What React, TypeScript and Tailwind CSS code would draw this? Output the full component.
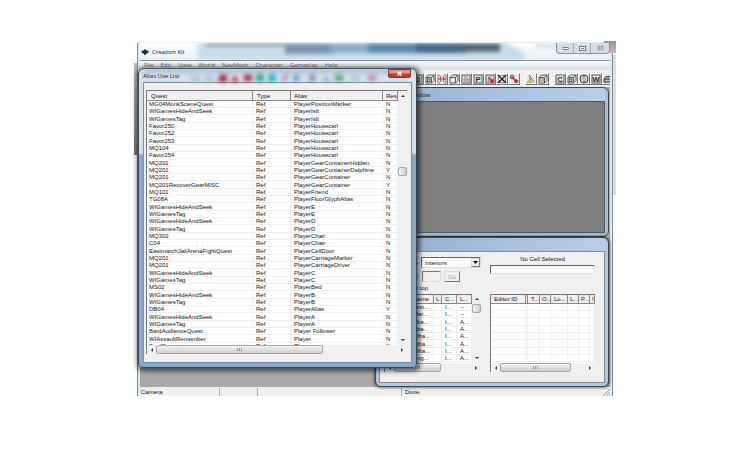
import React from 'react';

const MENUS = ['File', 'Edit', 'View', 'World', 'NavMesh', 'Character', 'Gameplay', 'Help'];

const ROWS: [string, string, string][] = [
  ['MG04MonkSceneQuest', 'PlayerPositionMarker', 'N'],
  ['WIGamesHideAndSeek', 'PlayerIsIt', 'N'],
  ['WIGamesTag', 'PlayerIsIt', 'N'],
  ['Favor250', 'PlayerHousecarl', 'N'],
  ['Favor252', 'PlayerHousecarl', 'N'],
  ['Favor253', 'PlayerHousecarl', 'N'],
  ['MQ104', 'PlayerHousecarl', 'N'],
  ['Favor254', 'PlayerHousecarl', 'N'],
  ['MQ201', 'PlayerGearContainerHidden', 'N'],
  ['MQ201', 'PlayerGearContainerDelphine', 'Y'],
  ['MQ201', 'PlayerGearContainer', 'N'],
  ['MQ201RecoverGearMISC', 'PlayerGearContainer', 'Y'],
  ['MQ101', 'PlayerFriend', 'N'],
  ['TG08A', 'PlayerFloorGlyphAlias', 'N'],
  ['WIGamesHideAndSeek', 'PlayerE', 'N'],
  ['WIGamesTag', 'PlayerE', 'N'],
  ['WIGamesHideAndSeek', 'PlayerD', 'N'],
  ['WIGamesTag', 'PlayerD', 'N'],
  ['MQ302', 'PlayerChair', 'N'],
  ['C04', 'PlayerChair', 'N'],
  ['EastmarchJailArenaFightQuest', 'PlayerCellDoor', 'N'],
  ['MQ201', 'PlayerCarriageMarker', 'N'],
  ['MQ201', 'PlayerCarriageDriver', 'N'],
  ['WIGamesHideAndSeek', 'PlayerC', 'N'],
  ['WIGamesTag', 'PlayerC', 'N'],
  ['MS02', 'PlayerBed', 'N'],
  ['WIGamesHideAndSeek', 'PlayerB', 'N'],
  ['WIGamesTag', 'PlayerB', 'N'],
  ['DB04', 'PlayerAlias', 'Y'],
  ['WIGamesHideAndSeek', 'PlayerA', 'N'],
  ['WIGamesTag', 'PlayerA', 'N'],
  ['BardAudienceQuest', 'Player Follower', 'N'],
  ['WIAssaultRemember', 'Player', 'N'],
  ['BardSongs', 'Player', 'N'],
];

const CELLS = [
  ['Test...', '--'],
  ['Mar...', '--'],
  ['Aba...', 'A...'],
  ['Aba...', 'A...'],
  ['Alfta...', 'A...'],
  ['Alfta...', 'A...'],
  ['Alfta...', 'A...'],
  ['Ang...', 'A...'],
];

type ToolName = 'zero' | 'cube' | 'split' | 'box' | 'square' | 'p' | 'snap' | 'cross' | 'link' | 'lamp' | 'bulb' | 'c' | 'circle' | 'w' | 'car';

const GROUPS: ToolName[][] = [
  ['zero', 'cube', 'split', 'box', 'square', 'p', 'snap', 'cross', 'link'],
  ['lamp', 'bulb'],
  ['c', 'cube', 'circle', 'w', 'car'],
];

function ToolIcon({ name }: { name: ToolName }) {
  const letters: Partial<Record<ToolName, string>> = { zero: '0', p: 'P', c: 'C', w: 'W' };
  return (
    <svg width="10" height="10" viewBox="0 0 10 10" fill="none" stroke="#333" strokeWidth="0.8">
      {letters[name] && (
        <>
          <rect x="1" y="1" width="8" height="8" />
          <text x="5" y="7.7" textAnchor="middle" fontSize="7.5" fontWeight="700" fontFamily="Liberation Sans, sans-serif" fill="#222" stroke="none">
            {letters[name]}
          </text>
        </>
      )}
      {(name === 'cube' || name === 'box' || name === 'bulb') && (
        <path d="M1 3.5h5.5v5.5H1zM1 3.5 3.5 1H9v5.5L6.5 9M6.5 3.5 9 1" />
      )}
      {name === 'cube' && <rect x="2.5" y="5" width="2.5" height="2.5" />}
      {name === 'bulb' && <circle cx="4" cy="5.5" r="1.8" fill="#dddc2c" stroke="#555" strokeWidth="0.5" />}
      {name === 'split' && (
        <>
          <path d="M3 1H1v8h2M7 1h2v8H7M3.5 2v6M6.5 2v6" stroke="#766" />
          <path d="M1 5h8M4 3.5 2.5 5 4 6.5M6 3.5 7.5 5 6 6.5" stroke="#d33" strokeWidth="1" />
        </>
      )}
      {(name === 'square' || name === 'snap') && (
        <>
          <rect x="1" y="1" width="8" height="8" />
          <path d="M3 3h4M3 5h4v2H3z" stroke="#666" />
        </>
      )}
      {name === 'snap' && <path d="M3.5 3.5 8 8M8 5v3H5" stroke="#d22" strokeWidth="1.3" />}
      {name === 'cross' && (
        <>
          <rect x="1.5" y="1.5" width="7" height="7" stroke="#777" />
          <path d="M1 1l8 8M9 1 1 9" stroke="#222" strokeWidth="1.4" />
        </>
      )}
      {name === 'link' && (
        <>
          <circle cx="3" cy="3" r="1.8" fill="#b99" stroke="#722" />
          <path d="M3.5 3.5 7 7" stroke="#c22" strokeWidth="1.6" />
          <circle cx="7.2" cy="7.2" r="1.5" fill="#e33" stroke="#822" />
        </>
      )}
      {name === 'lamp' && (
        <>
          <path d="M3 1l5 7M4 3.5v4.5" stroke="#333" />
          <path d="M1 8.5 4 5l2 3.5z" fill="#d4c83a" stroke="#887d22" strokeWidth="0.5" />
        </>
      )}
      {name === 'circle' && (
        <>
          <circle cx="5" cy="5" r="4" strokeWidth="1" />
          <path d="M5 2 3.5 5 5 8l1.5-3z" stroke="#666" />
        </>
      )}
      {name === 'car' && <path d="M1 5l2-2.5h5L9 5v3H1zM1 5h8M2.5 8v1M7.5 8v1" fill="#bbb" strokeWidth="1" />}
    </svg>
  );
}

function Arrow({ dir }: { dir: 'up' | 'down' | 'left' | 'right' }) {
  const paths = { up: 'M1 4h4L3 2z', down: 'M1 2h4L3 4z', left: 'M4 1v4L2 3z', right: 'M2 1v4l2-2z' };
  return (
    <svg width="6" height="6" viewBox="0 0 6 6" fill="#333">
      <path d={paths[dir]} />
    </svg>
  );
}

function HScroll({ thumb }: { thumb: string }) {
  return (
    <div className="flex h-[9px] shrink-0 items-center bg-[#f0f0f0] px-0.5">
      <Arrow dir="left" />
      <div className="flex h-full flex-1 px-px">
        <div className={`flex h-full items-center justify-center gap-px rounded-xs border border-[#a5a5a5] bg-linear-to-b from-[#f4f4f4] to-[#cfcfcf] ${thumb}`}>
          <i className="h-[3px] w-px bg-[#999]" />
          <i className="h-[3px] w-px bg-[#999]" />
          <i className="h-[3px] w-px bg-[#999]" />
        </div>
      </div>
      <Arrow dir="right" />
    </div>
  );
}

function VScroll({ offset }: { offset: string }) {
  return (
    <div className="flex w-[9px] shrink-0 flex-col items-center bg-[#f0f0f0] py-0.5">
      <Arrow dir="up" />
      <div className={`flex-1 ${offset}`}>
        <div className="h-[9px] w-[9px] rounded-xs border border-[#a5a5a5] bg-linear-to-r from-[#f4f4f4] to-[#cfcfcf]" />
      </div>
      <Arrow dir="down" />
    </div>
  );
}

function Th({ children, className = 'pl-1' }: { children?: React.ReactNode; className?: string }) {
  return (
    <th className={`border-r border-b border-[#8a8a8a] bg-[#f0f0f0] py-0 pr-0 text-left font-normal whitespace-nowrap ${className}`}>
      {children}
    </th>
  );
}

function Td({ children, className = 'pl-0' }: { children?: React.ReactNode; className?: string }) {
  return (
    <td className={`border-r border-b border-[#eeeeee] py-0 pr-0 leading-[6px] whitespace-nowrap ${className}`}>
      {children}
    </td>
  );
}

function AliasWindow() {
  return (
    <section className="absolute top-[25px] left-0 flex h-[300px] w-[279px] flex-col rounded-t-md rounded-b-sm border border-[#3c4650] bg-linear-to-b from-[#d4e1ef] from-28% to-[#86a9cb] to-29% px-1 pb-1 shadow-[1px_1px_5px_2px_rgba(0,0,0,0.6)]">
      <header className="relative flex h-[13px] shrink-0 items-center justify-between">
        <svg className="absolute inset-0 h-full w-full blur-[2px]" aria-hidden="true">
          <rect width="100%" height="4" fill="#8799ae" opacity="0.5" />
          <rect x="48" y="7" width="9" height="6" fill="#b3c0ca" />
          <rect x="62" y="7" width="8" height="6" fill="#b3c0ca" />
          <rect x="76" y="6" width="8" height="7" fill="#b82434" />
          <path d="M88 13l4-7 4 7z" fill="#a63243" />
          <rect x="101" y="6" width="8" height="6" fill="#9c2441" />
          <circle cx="117" cy="9" r="4" fill="#32a182" />
          <circle cx="129" cy="9" r="4" fill="#22b9bd" />
          <path d="M139 12l6-6" stroke="#965466" strokeWidth="2" />
          <rect x="151" y="6" width="5" height="6" fill="#5691c6" />
          <rect x="167" y="6" width="5" height="6" fill="#648779" />
          <rect x="180" y="9" width="7" height="3" fill="#879cab" />
          <rect x="192" y="6" width="8" height="6" fill="#54a276" />
          <rect x="208" y="6" width="8" height="6" fill="#b4c3cf" />
          <rect x="225" y="6" width="8" height="6" fill="#bb8b9d" />
        </svg>
        <h2 className="relative font-['Open_Sans',sans-serif] text-[6px] leading-2">Alias Use List</h2>
        <button aria-label="Close" className="relative mr-px flex h-[9px] w-[23px] items-center justify-center self-start rounded-b-xs border border-[#7c3b38] bg-linear-to-b from-[#e09584] from-45% to-[#c03c2a] to-55%">
          <svg width="7" height="5" viewBox="0 0 7 5" stroke="#fff" strokeWidth="1.4">
            <path d="M1.5.5l4 4M5.5.5l-4 4" />
          </svg>
        </button>
      </header>
      <div className="flex min-h-0 flex-1 flex-col border border-[#7e8c9b] bg-[#f0f0f0] pt-[7px] pr-1 pb-2 pl-0.5">
        <div className="flex min-h-0 flex-1 flex-col border-t border-l border-[#777] bg-white">
          <div className="flex min-h-0 flex-1">
            <div className="min-w-0 flex-1 overflow-hidden">
              <table className="w-full table-fixed border-separate border-spacing-0">
                <thead>
                  <tr className="h-[10px]">
                    <Th className="w-[106px] pl-1">Quest</Th>
                    <Th className="w-[38px] pl-1">Type</Th>
                    <Th className="w-[92px] pl-[3px]">Alias</Th>
                    <Th className="pl-[3px]">Res</Th>
                  </tr>
                </thead>
                <tbody>
                  {ROWS.map(([quest, alias, res], i) => (
                    <tr key={i} className="h-[7px] nth-[3n]:h-[8px]">
                      <Td className="pl-0.5">{quest}</Td>
                      <Td className="pl-[3px]">Ref</Td>
                      <Td className="pl-[3px]">{alias}</Td>
                      <Td className="pl-[3px]">{res}</Td>
                    </tr>
                  ))}
                </tbody>
              </table>
            </div>
            <VScroll offset="pt-[68px]" />
          </div>
          <HScroll thumb="w-[69%]" />
        </div>
      </div>
    </section>
  );
}

function CellWindow() {
  return (
    <section className="absolute right-px bottom-0 flex h-[150px] w-[234px] flex-col rounded-md border border-[#3c4650] bg-[#b3cae2] px-[3px] pb-[3px] shadow-[0_0_3px_1px_rgba(0,0,0,0.5)]">
      <header className="h-[13px] shrink-0 rounded-t bg-linear-to-r from-[#91aed0] to-[#b9cfe8]" />
      <div className="flex min-h-0 flex-1 gap-[9px] border border-[#7e8c9b] bg-[#f0f0f0] pt-[5px] pr-[9px] pb-[10px] pl-1">
        <div className="flex w-[97px] shrink-0 flex-col">
          <div className="flex items-center justify-end gap-[3px]">
            <label htmlFor="space" className="whitespace-nowrap">Space</label>
            <span className="relative w-[60px] shrink-0">
              <select id="space" className="block h-[11px] w-full appearance-none border border-[#666] border-r-[#ddd] border-b-[#ddd] bg-white pl-[3px] leading-[8px]">
                <option>Interiors</option>
              </select>
              <span className="pointer-events-none absolute top-px right-px flex h-[9px] w-[9px] items-center justify-center border border-[#ddd] border-r-[#777] border-b-[#777] bg-[#f0f0f0]">
                <svg width="5" height="3" viewBox="0 0 5 3">
                  <path d="M0 0h5L2.500 3z" />
                </svg>
              </span>
            </span>
          </div>
          <div className="mt-[3px] flex items-center gap-[3px] pl-[31px]">
            <label htmlFor="coord">Y</label>
            <input id="coord" disabled className="h-[11px] w-[19px] border border-[#777] border-r-[#ddd] border-b-[#ddd] bg-[#f0f0f0]" />
            <button disabled className="h-[11px] w-[16px] border border-[#ddd] border-r-[#777] border-b-[#777] text-[#999]">
              Go
            </button>
          </div>
          <p className="mt-0.5 h-2 pl-[29px]">at top</p>
          <div className="mt-0.5 flex min-h-0 flex-1 flex-col border-l border-[#777] bg-white">
            <div className="flex min-h-0 flex-1">
              <div className="min-w-0 flex-1 overflow-hidden">
                <table className="w-full table-fixed border-separate border-spacing-0 border-t border-[#777]">
                  <thead>
                    <tr className="h-[9px]">
                      <Th className="w-[49px] pl-[28px]">Name</Th>
                      <Th className="w-[8px] pl-[2px]">L</Th>
                      <Th className="w-[15px] pl-[3px]">C...</Th>
                      <Th className="pl-[3px]">L...</Th>
                    </tr>
                  </thead>
                  <tbody>
                    {CELLS.map(([name, loc], i) => (
                      <tr key={i} className="h-[7px] nth-[3n]:h-[8px]">
                        <Td className="pl-[28px]">{name}</Td>
                        <Td />
                        <Td className="pl-[3px]">I...</Td>
                        <Td className="pl-[3px]">{loc}</Td>
                      </tr>
                    ))}
                  </tbody>
                </table>
              </div>
              <VScroll offset="pt-0.5" />
            </div>
            <HScroll thumb="w-[47px]" />
          </div>
        </div>
        <div className="flex min-w-0 flex-1 flex-col">
          <label htmlFor="cell" className="h-2 text-center leading-[5px]">No Cell Selected</label>
          <input id="cell" className="h-[9px] w-full border border-[#666] border-r-[#ddd] border-b-[#ddd] bg-white" />
          <div className="mt-5 flex min-h-0 flex-1 flex-col border-l border-[#777] bg-white">
            <div className="min-h-0 flex-1 overflow-hidden">
              <table className="w-full table-fixed border-separate border-spacing-0 border-t border-[#777]">
                <thead>
                  <tr className="h-[9px]">
                    <Th className="w-[35px] pl-[3px]">Editor ID</Th>
                    <Th className="w-[2px] pl-0" />
                    <Th className="w-[12px] pl-[3px]">T...</Th>
                    <Th className="w-[11px] pl-[2px]">O...</Th>
                    <Th className="w-[17px] pl-[3px]">Lo...</Th>
                    <Th className="w-[11px] pl-[2px]">L...</Th>
                    <Th className="w-[11px] pl-[2px]">P...</Th>
                    <Th className="pl-[2px]">I</Th>
                  </tr>
                </thead>
                <tbody>
                  {CELLS.map((_, i) => (
                    <tr key={i} className="h-[7px] nth-[3n]:h-[8px]">
                      {[0, 1, 2, 3, 4, 5, 6, 7].map((c) => (
                        <Td key={c} />
                      ))}
                    </tr>
                  ))}
                </tbody>
              </table>
            </div>
            <HScroll thumb="w-[82%]" />
          </div>
        </div>
      </div>
    </section>
  );
}

export default function App() {
  return (
    <div className="flex min-h-screen flex-col bg-white px-[137px] pt-[42px] pb-[72px] font-['Liberation_Sans',sans-serif] text-[6px] leading-2 text-[#111]">
      <main className="relative flex flex-1 flex-col border-t border-r border-l border-[#7f8c96] border-t-[#e3eaf0] bg-[#d9ecf6] px-0.5">
        <div className="absolute top-5 -left-[4px] h-[92px] w-[3px] bg-linear-to-b from-[#bbb] to-[#777]" />
        <div className="absolute -top-0.5 -right-[4px] h-3 w-3 bg-linear-to-b from-[#a18a9b] to-[#c9b5c1]" />
        <div className="absolute top-3 -right-[4px] h-[140px] w-[3px] bg-[#dedede]" />
        <header className="relative flex h-[17px] shrink-0 items-center justify-between overflow-hidden bg-linear-to-b from-white to-[#e5f1f8] pl-px">
          <svg className="absolute inset-0 h-full w-full blur-[2px]" preserveAspectRatio="none" viewBox="0 0 470 17" aria-hidden="true">
            <path d="M58-3h305l22 14 0 7H58z" fill="#c6ddec" />
            <rect x="66" y="-2" width="85" height="5" fill="#8396a5" />
            <rect x="145" y="-3" width="50" height="14" fill="#7895ad" />
            <rect x="190" y="-3" width="44" height="13" fill="#8fadc8" />
            <rect x="228" y="-3" width="54" height="13" fill="#5b86a9" />
            <rect x="276" y="-3" width="50" height="13" fill="#44698a" />
            <rect x="318" y="-3" width="42" height="12" fill="#50687d" />
            <rect x="395" y="-2" width="40" height="8" fill="#dfe5f0" />
          </svg>
          <div className="relative flex items-center gap-[3px]">
            <svg width="8" height="6" viewBox="0 0 8 6" fill="#223032">
              <path d="M0 1.500 2 2 3 .5h2L6 2l2-.5L7 4 5.500 4.500 4.500 6h-1L2.500 4.500 1 4z" />
            </svg>
            <h1 className="font-['Open_Sans',sans-serif]">Creation Kit</h1>
          </div>
          <div className="relative flex h-[11px] self-start rounded-b-sm border border-t-0 border-[#8192a3] bg-[#d6dde8]">
            <button aria-label="Minimize" className="flex w-[17px] items-center justify-center border-r border-[#a1b0be]">
              <i className="h-[3px] w-[7px] rounded-xs border border-[#777] bg-white" />
            </button>
            <button aria-label="Maximize" className="flex w-[17px] items-center justify-center border-r border-[#a1b0be]">
              <i className="flex h-[5px] w-[7px] items-center justify-center border border-[#777] bg-white">
                <i className="h-px w-[3px] bg-[#777]" />
              </i>
            </button>
            <button aria-label="Close" className="flex w-[18px] items-center justify-center">
              <svg width="7" height="6" viewBox="0 0 7 6" fill="none">
                <path d="M1 1l5 4M6 1 1 5" stroke="#666" strokeWidth="2" />
                <path d="M1 1l5 4M6 1 1 5" stroke="#fff" strokeWidth="0.8" />
              </svg>
            </button>
          </div>
        </header>
        <nav className="flex h-[10px] shrink-0 items-center gap-[7px] border-t border-[#8a8f98] bg-linear-to-b from-[#fafbfd] to-[#dadeec] pl-1 font-['Open_Sans',sans-serif] leading-[7px] text-[#666]">
          {MENUS.map((m) => (
            <button key={m}>{m}</button>
          ))}
        </nav>
        <div className="flex h-[17px] shrink-0 items-center justify-end gap-[5px] overflow-hidden bg-[#f0f0f0]">
          {GROUPS.map((group, g) => (
            <div key={g} className="flex shrink-0 last:-mr-1">
              {group.map((name, i) => (
                <button key={i} aria-label={name} className="flex h-3 w-3 items-center justify-center border border-white border-r-[#777] border-b-[#777] bg-[#e9e9e9]">
                  <ToolIcon name={name} />
                </button>
              ))}
            </div>
          ))}
        </div>
        <div className="relative flex-1 bg-[#a9a9a9]">
          <section className="absolute top-0 right-px left-[200px] flex h-[150px] flex-col rounded-md border border-[#3c4650] bg-[#a8c0d9] px-[3px] pb-[3px]">
            <header className="flex h-[13px] shrink-0 items-center rounded-t bg-linear-to-r from-[#8fadcf] to-[#b9cfe8] pl-[42px] font-['Open_Sans',sans-serif]">
              <h2>Render Window</h2>
            </header>
            <div className="flex-1 border border-[#555] bg-[#7f7f7f]" />
          </section>
          <CellWindow />
        </div>
        <footer className="flex h-[9px] shrink-0 gap-0.5 bg-[#f0f0f0] pt-px">
          <span className="w-[80px] border-r border-[#aaa] pl-px">Camera</span>
          <span className="w-[36px] border-r border-[#aaa]" />
          <span className="w-[142px] border-r border-[#aaa]" />
          <span className="flex-1 pl-px">Done.</span>
          <svg width="8" height="8" viewBox="0 0 8 8" stroke="#999">
            <path d="M1 8l7-7M4 8l4-4M7 8l1-1" />
          </svg>
        </footer>
        <AliasWindow />
      </main>
    </div>
  );
}
